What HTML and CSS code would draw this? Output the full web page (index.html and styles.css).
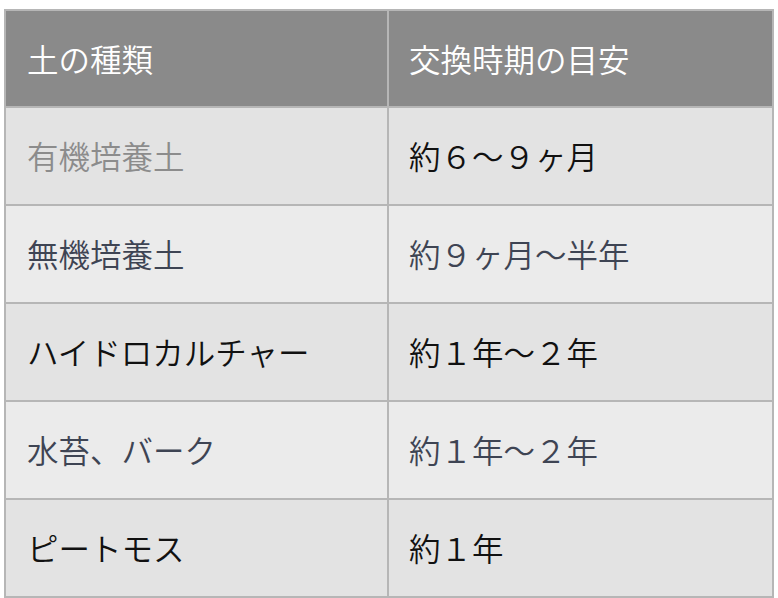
FILE: index.html
```html
<!DOCTYPE html>
<html lang="ja">
<head>
<meta charset="utf-8">
<link rel="stylesheet" href="styles.css">
</head>
<body>
<table class="soil">
  <colgroup><col class="c1"><col class="c2"></colgroup>
  <thead>
    <tr class="head"><th>土の種類</th><th>交換時期の目安</th></tr>
  </thead>
  <tbody>
    <tr class="odd"><td class="muted">有機培養土</td><td>約６～９ヶ月</td></tr>
    <tr class="even"><td>無機培養土</td><td>約９ヶ月～半年</td></tr>
    <tr class="odd"><td>ハイドロカルチャー</td><td>約１年～２年</td></tr>
    <tr class="even"><td>水苔、バーク</td><td>約１年～２年</td></tr>
    <tr class="odd"><td>ピートモス</td><td>約１年</td></tr>
  </tbody>
</table>
</body>
</html>
```
FILE: styles.css
```css
html, body {
  margin: 0;
  padding: 0;
  background: #ffffff;
}
body {
  font-family: "Noto Sans CJK JP", "Noto Sans", sans-serif;
}
.soil {
  border-collapse: collapse;
  table-layout: fixed;
  width: 770px;
  margin: 9px 0 0 4px;
  border: 2px solid #b6b6b6;
}
.c1 { width: 383px; }
.c2 { width: 385px; }
.soil th,
.soil td {
  border: 2px solid #b6b6b6;
  padding: 0 0 0 21px;
  height: 96px;
  text-align: left;
  vertical-align: middle;
  font-size: 31.5px;
  font-weight: 350;
  line-height: 1;
  white-space: nowrap;
}
.soil th + th,
.soil td + td {
  padding-left: 20px;
}
.soil th {
  height: 95px;
  background: #8a8a8a;
  color: #ffffff;
}
.odd td {
  background: #e3e3e3;
  color: #111111;
}
.even td {
  background: #ebebeb;
  color: #3e4453;
}
.odd td.muted {
  color: #8c8c8c;
}
```
